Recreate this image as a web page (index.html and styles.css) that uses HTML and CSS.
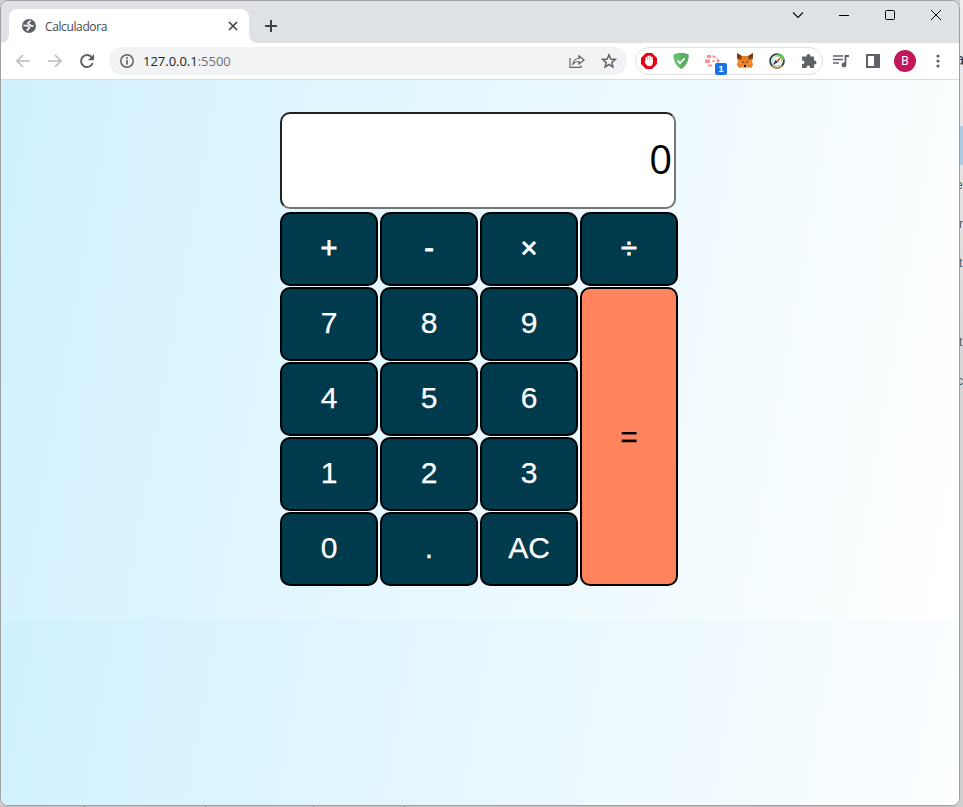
FILE: index.html
```html
<!DOCTYPE html>
<html lang="pt-BR">
<head>
<meta charset="utf-8">
<title>Calculadora</title>
<link rel="stylesheet" href="styles.css">
</head>
<body>
<div class="desktop">
<div class="window">
  <header class="tabstrip">
    <div class="tab">
      <svg class="globe" viewBox="0 0 14 14" width="14" height="14"><circle cx="7" cy="7" r="7" fill="#5f6368"/><path d="M8.300 1.500C8.600 3 6 2.800 6 4.300c0 1 2.200.8 2.700 2 .4 1 1.300.8 2.800.5M1.500 6.500l3 .2c1.500.3 3.300 1 2.800 2.200-.5 1-1.800.8-2 3" fill="none" stroke="#fff" stroke-width="1.700"/></svg>
      <span class="tab-title">Calculadora</span>
      <svg class="tab-close" viewBox="0 0 10 10" width="10" height="10"><path d="M1 1l8 8M9 1L1 9" stroke="#3c4043" stroke-width="1.600"/></svg>
    </div>
    <svg class="new-tab" viewBox="0 0 12 12" width="12" height="12"><path d="M6 0v12M0 6h12" stroke="#3c4043" stroke-width="2"/></svg>
    <div class="controls">
      <svg viewBox="0 0 12 12" width="12" height="12"><path d="M1 3.500l5 5 5-5" fill="none" stroke="#111" stroke-width="1.200"/></svg>
      <svg viewBox="0 0 12 12" width="12" height="12"><path d="M1 6.500h10" stroke="#000"/></svg>
      <svg viewBox="0 0 12 12" width="12" height="12"><rect x="1.500" y="1.500" width="9" height="9" rx="1" fill="none" stroke="#000"/></svg>
      <svg viewBox="0 0 12 12" width="12" height="12"><path d="M1 1l10 10M11 1L1 11" stroke="#000"/></svg>
    </div>
  </header>
  <nav class="toolbar">
    <div class="nav-icons">
      <svg viewBox="0 0 16 16" width="16" height="16"><path d="M15 8H2M8 2L2 8l6 6" fill="none" stroke="#babcbe" stroke-width="1.700"/></svg>
      <svg viewBox="0 0 16 16" width="16" height="16"><path d="M1 8h13M8 2l6 6-6 6" fill="none" stroke="#babcbe" stroke-width="1.700"/></svg>
      <svg viewBox="0 0 16 16" width="16" height="16"><path d="M13.700 10A6 6 0 1 1 12.500 4" fill="none" stroke="#5f6368" stroke-width="2"/><path d="M15 1v6.200H8.800z" fill="#5f6368"/></svg>
    </div>
    <div class="address">
      <svg viewBox="0 0 14 14" width="14" height="14"><circle cx="7" cy="7" r="6.200" fill="none" stroke="#5f6368" stroke-width="1.500"/><path d="M7 6v4.500M7 3.300v1.600" stroke="#5f6368" stroke-width="1.700"/></svg>
      <span class="url">127.0.0.1<span class="port">:5500</span></span>
      <svg class="share" viewBox="0 0 16 16" width="16" height="16"><path d="M1 5v9.400h11v-2M4 11c.5-4 2.500-5.500 6-5.500V2.800L15 7l-5 4V8.500c-2.800 0-4.500.7-6 2.500z" fill="none" stroke="#5f6368" stroke-width="1.200"/></svg>
      <svg viewBox="0 0 16 16" width="16" height="16"><path d="M8 1.800l1.800 4.200 4.600.4-3.500 3 1 4.500L8 11.500l-3.900 2.400 1-4.500-3.500-3 4.600-.4z" fill="none" stroke="#5f6368" stroke-width="1.500"/></svg>
    </div>
    <div class="extensions">
      <svg viewBox="0 0 18 18" width="18" height="18"><path d="M6 1h6l5 5v6l-5 5H6l-5-5V6z" fill="#e60012"/><path d="M6.300 9.500V5.500M8.200 8.500V4.300M10.100 8.500V4.300M12 9.500V5.500" stroke="#fff" stroke-width="1.600" stroke-linecap="round"/><path d="M5.500 8h7.300v3c0 2-1.300 3.300-3.300 3.300-2 0-3-1-5-4.300l1-.7z" fill="#fff"/></svg>
      <svg viewBox="0 0 18 18" width="18" height="18"><path d="M9 1c3 0 5.500.6 7.500 1.500C16.800 9 14 14 9 17 4 14 1.200 9 1.500 2.500 3.500 1.600 6 1 9 1z" fill="#68bc71"/><path d="M9 1c3 0 5.500.6 7.500 1.500C16.800 9 14 14 9 17z" fill="#5aad65"/><path d="M5.500 8.500l2.600 2.700 4.500-5" fill="none" stroke="#fff" stroke-width="1.700"/></svg>
      <div class="badge-box">
        <svg viewBox="0 0 18 18" width="18" height="18"><g fill="#ff8a91"><path d="M3 3h4v3H3zM1 7.500h5v3.500H1zM4 12.500h4v2H4zM8.500 3l3 1.500v2l-3-1zM12.500 6l4 2.700-3.500 2.500V9zM8.500 8h2v2h-2z"/></g></svg>
        <span class="badge">1</span>
      </div>
      <svg viewBox="0 0 18 18" width="18" height="18"><path d="M1 1l5 3h6l5-3v6l-1 2 1 4-2 3-4-1-1 1H8l-1-1-4 1-2-3 1-4-1-2z" fill="#ed7d22"/><path d="M1 1l5 3-1 4-4-2zM17 1l-5 3 1 4 4-2z" fill="#763e1a"/><path d="M2 9l4-1 1 5-4-1zM16 9l-4-1-1 5 4-1z" fill="#f58d32"/><path d="M5 9l3 1-1 1zM13 9l-3 1 1 1z" fill="#233447"/><path d="M7 13h4l.5 3h-5z" fill="#c0ad9e"/><path d="M8 13h2v2H8z" fill="#161616"/></svg>
      <svg viewBox="0 0 18 18" width="18" height="18"><circle cx="9" cy="9" r="6.900" fill="#fff" stroke="#26462f" stroke-width="1.800"/><path d="M9 2.600a6.400 6.400 0 0 1 6.200 5.500" fill="none" stroke="#64c43a" stroke-width="3"/><path d="M14 14A7 7 0 0 1 4 14" fill="none" stroke="#d99f3c" stroke-width="1.500"/><circle cx="9" cy="9" r="4.600" fill="none" stroke="#b4c8d4"/><path d="M13 5l-2.500 5.200-2-2z" fill="#e9442d"/><path d="M5 13l2.500-5.200 2.500 2.400z" fill="#263f63"/></svg>
      <svg viewBox="0 0 18 18" width="18" height="18"><path d="M2 4.500h4.500V4a2 2 0 0 1 4 0v.5H14v4h.5a2 2 0 0 1 0 4H14V16h-4v-.8a1.700 1.700 0 0 0-3.400 0v.8H2v-4h.7a1.700 1.700 0 0 0 0-3.500H2z" fill="#5f6368"/></svg>
    </div>
    <svg class="music" viewBox="0 0 16 16" width="16" height="16"><path d="M0 3h10M0 6.500h10M0 10h6" stroke="#5f6368" stroke-width="1.700"/><path d="M12.500 12V3H16" fill="none" stroke="#5f6368" stroke-width="1.800"/><circle cx="11" cy="12" r="2.400" fill="#5f6368"/></svg>
    <svg class="panel" viewBox="0 0 14 14" width="14" height="14"><path d="M0 0h14v14H0zM2 2v10h6V2z" fill="#5f6368" fill-rule="evenodd"/></svg>
    <div class="avatar">B</div>
    <svg class="kebab" viewBox="0 0 4 14" width="4" height="14"><g fill="#5f6368"><circle cx="2" cy="2" r="1.600"/><circle cx="2" cy="7" r="1.600"/><circle cx="2" cy="12" r="1.600"/></g></svg>
  </nav>
  <main class="page">
    <div class="calculator">
      <input class="display" type="text" value="0" readonly>
      <div class="keys">
        <button class="key op">+</button><button class="key op">-</button><button class="key op">×</button><button class="key op">÷</button>
        <button class="key">7</button><button class="key">8</button><button class="key">9</button><button class="key equals">=</button>
        <button class="key">4</button><button class="key">5</button><button class="key">6</button>
        <button class="key">1</button><button class="key">2</button><button class="key">3</button>
        <button class="key">0</button><button class="key">.</button><button class="key">AC</button>
      </div>
    </div>
  </main>
</div>
<aside class="behind"><span class="big">a</span><i class="selection"></i><span class="e">e'</span><span>r</span><span>t</span><span class="gap">t</span><span class="c">c</span></aside>
<div class="ticks"><i></i><i></i><i></i><i></i></div>
</div>
</body>
</html>
```
FILE: styles.css
```css
* { box-sizing: border-box; }
body { margin: 0; font-family: "Open Sans", "Noto Sans", sans-serif; overflow: hidden; }
svg { display: block; flex: none; }
.desktop { width: 963px; height: 807px; background: #d0cecf; display: grid; grid-template-columns: 960px 3px; grid-template-rows: 806px 1px; }
.window { border: 1px solid #a0a0a2; border-radius: 8px; overflow: hidden; display: flex; flex-direction: column; background: #fff; }
.tabstrip { height: 42px; background: #dee1e6; display: flex; flex: none; padding-left: 8px; }
.tab { width: 240px; height: 34px; margin-top: 8px; background: #fff; border-radius: 8px 8px 0 0; display: flex; align-items: center; padding: 0 11px 0 13px; position: relative; }
.tab::before, .tab::after { content: ""; position: absolute; bottom: 0; width: 8px; height: 8px; }
.tab::before { left: -8px; background: radial-gradient(circle at 0 0, transparent 7.5px, #fff 8px); }
.tab::after { right: -8px; background: radial-gradient(circle at 100% 0, transparent 7.5px, #fff 8px); }
.tab-title { font-size: 12px; letter-spacing: -.38px; color: #45494d; margin-left: 9px; flex: 1; }
.new-tab { margin: 19px 0 0 16px; }
.controls { margin: 8px 17px 0 auto; display: flex; gap: 34px; }
.toolbar { height: 37px; flex: none; background: #fff; border-bottom: 1px solid #dadce0; display: flex; align-items: center; padding-left: 14px; }
.nav-icons { display: flex; gap: 16px; }
.address { width: 518px; height: 28px; margin-left: 14px; background: #f1f3f4; border-radius: 14px; display: flex; align-items: center; padding: 0 10px 0 11px; }
.url { font-size: 13px; letter-spacing: -.02px; color: #202124; margin-left: 9px; }
.port { color: #6b6f73; }
.share { margin: 0 16px 0 auto; }
.extensions { width: 188px; height: 28px; margin-left: 8px; border: 1px solid #dfe1e5; border-radius: 14px; display: flex; align-items: center; gap: 14px; padding-left: 4px; }
.badge-box { position: relative; }
.badge { position: absolute; left: 11px; top: 11px; width: 12px; height: 12px; border-radius: 2px; background: #1a73e8; color: #fff; font: bold 9px/12px "Liberation Sans", sans-serif; text-align: center; }
.music { margin-left: 10px; }
.panel { margin-left: 17px; }
.avatar { width: 22px; height: 22px; margin-left: 14px; border-radius: 50%; background: #c2185b; color: #fff; font: 12px/22px Roboto, sans-serif; text-align: center; }
.kebab { margin-left: 20px; }
.page { flex: 1; padding: 32px 0 0 279px; background: linear-gradient(100deg, #d1f1ff, #fff) 0 0 / 100% 539px; }
.calculator { width: 398px; }
.display { display: block; width: 396px; height: 97px; margin: 0; padding: 0 2px 4px; border: 2px solid; border-color: #212121 #767676 #767676 #212121; border-radius: 10px; background: #fff; color: #000; font: 40px "Open Sans", sans-serif; text-align: right; outline: 0; }
.keys { display: grid; grid-template-columns: repeat(4, 98px); grid-template-rows: repeat(5, 74px); gap: 1px 2px; margin-top: 3px; }
.key { margin: 0; padding: 0 0 2px; border: 2px solid #000; border-radius: 10px; background: #003a4d; color: #fff; font: 30px "Liberation Sans", sans-serif; -webkit-text-stroke: .25px; }
.op { -webkit-text-stroke: .8px #fff; font-size: 29px; }
.equals { grid-column: 4; grid-row: 2 / 6; background: #ff835d; color: #000; padding: 0; }
.behind { display: flex; flex-direction: column; overflow: hidden; font: 12px/16px "Liberation Sans", sans-serif; color: #555; background: linear-gradient(#eeeeee, #d5d5d5 400px, #cecece); }
.behind span { height: 16px; margin: 23px 0 0 -1px; }
.behind .big { font-size: 17px; margin: 52px 0 0 -5px; color: #333; }
.selection { height: 39px; margin-top: 58px; background: #aecbe3; }
.behind .e { margin: 12px 0 0 -4px; }
.behind .gap { margin-top: 63px; }
.behind .c { margin-left: -3px; }
.ticks { display: grid; grid-template-columns: 121px 108px 91px 1px; padding-left: 84px; background: #c9c2c3; }
.ticks i { width: 1px; height: 1px; background: #888; }
```
